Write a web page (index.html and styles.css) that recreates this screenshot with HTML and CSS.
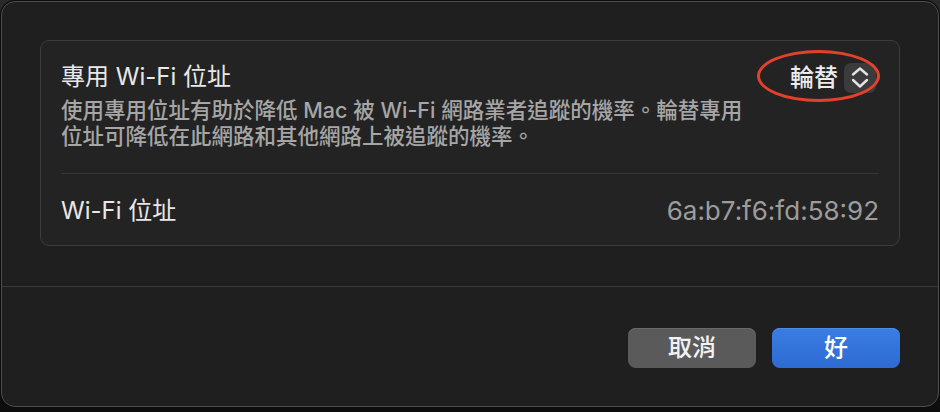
FILE: index.html
```html
<!DOCTYPE html>
<html lang="zh-Hant">
<head>
<meta charset="utf-8">
<title>專用 Wi-Fi 位址</title>
<link rel="stylesheet" href="styles.css">
</head>
<body>
<div class="window">
  <div class="content">
    <div class="group">
      <div class="row row-main">
        <div class="text">
          <div class="title">專用 Wi-Fi 位址</div>
          <div class="desc">使用專用位址有助於降低 Mac 被 Wi-Fi 網路業者追蹤的機率。輪替專用位址可降低在此網路和其他網路上被追蹤的機率。</div>
        </div>
        <div class="popup">
          <span class="popup-label">輪替</span>
          <span class="stepper">
            <svg width="32" height="30" viewBox="0 0 32 30"><path d="M9 11.5 L16 5.5 L23 11.5 M9 17 L16 23.5 L23 17" fill="none" stroke="#e4e4e4" stroke-width="2.4" stroke-linecap="round" stroke-linejoin="round"/></svg>
          </span>
        </div>
        <div class="highlight"></div>
      </div>
      <div class="sep"></div>
      <div class="row row-addr">
        <div class="label">Wi-Fi 位址</div>
        <div class="value">6a:b7:f6:fd:58:92</div>
      </div>
    </div>
  </div>
  <div class="footer">
    <button class="btn btn-cancel">取消</button>
    <button class="btn btn-ok">好</button>
  </div>
</div>
</body>
</html>
```

FILE: styles.css
```css
html, body {
  margin: 0;
  padding: 0;
}
body {
  width: 940px;
  height: 412px;
  background: linear-gradient(#2a2a2a, #1c1c1c 60%, #0d0d0d);
  font-family: Inter, "Noto Sans CJK TC", sans-serif;
  overflow: hidden;
}
.window {
  margin: 1px 1px 0 1px;
  width: 936px;
  height: 404px;
  background: #1f1f1f;
  border: 1px solid #4e4e4e;
  border-radius: 14px;
  box-shadow: 0 0 0 1px #0b0b0b;
  display: flex;
  flex-direction: column;
}
.content {
  padding: 38px 38px 40px 38px;
  border-bottom: 1px solid #3a3a3a;
}
.group {
  background: #232323;
  border: 1px solid #3c3c3c;
  border-radius: 9px;
  padding: 0 20px;
}
.row {
  display: flex;
  justify-content: space-between;
}
.row-main {
  position: relative;
  padding: 20px 0 24px 0;
  align-items: flex-start;
}
.title {
  font-size: 24px;
  line-height: 32px;
  color: #e8e8e8;
}
.desc {
  margin-top: 4px;
  width: 690px;
  font-size: 21.5px;
  line-height: 26px;
  font-weight: 500;
  color: #a6a6a6;
}
.popup {
  display: flex;
  align-items: center;
  gap: 6px;
  margin-top: 2px;
  margin-right: 3px;
}
.popup-label {
  font-size: 24px;
  line-height: 30px;
  font-weight: 500;
  color: #ececec;
}
.stepper {
  width: 32px;
  height: 30px;
  border-radius: 7px;
  background: #3b3b3b;
  display: flex;
}
.highlight {
  position: absolute;
  left: 696px;
  top: 9px;
  width: 117px;
  height: 46px;
  border: 3.5px solid #e4412c;
  border-radius: 50%;
}
.sep {
  height: 1px;
  background: #363636;
}
.row-addr {
  padding: 21px 0 18px 0;
  align-items: center;
}
.label {
  font-size: 24px;
  line-height: 32px;
  color: #e8e8e8;
}
.value {
  font-size: 26px;
  line-height: 32px;
  color: #9c9c9c;
}
.footer {
  flex: 1;
  display: flex;
  justify-content: flex-end;
  align-items: flex-start;
  gap: 16px;
  padding: 41px 38px 0 0;
}
.btn {
  width: 128px;
  height: 40px;
  border: none;
  border-radius: 8px;
  font-family: Inter, "Noto Sans CJK TC", sans-serif;
  font-size: 24px;
  line-height: 40px;
  font-weight: 500;
  padding: 0;
  color: #f2f2f2;
}
.btn-cancel {
  background: #5a5a5a;
  box-shadow: inset 0 1px 0 #6a6a6a;
}
.btn-ok {
  background: linear-gradient(#3a7de2, #2e6bd2);
  box-shadow: inset 0 1px 0 #4c8ae6;
  color: #ffffff;
}
```
